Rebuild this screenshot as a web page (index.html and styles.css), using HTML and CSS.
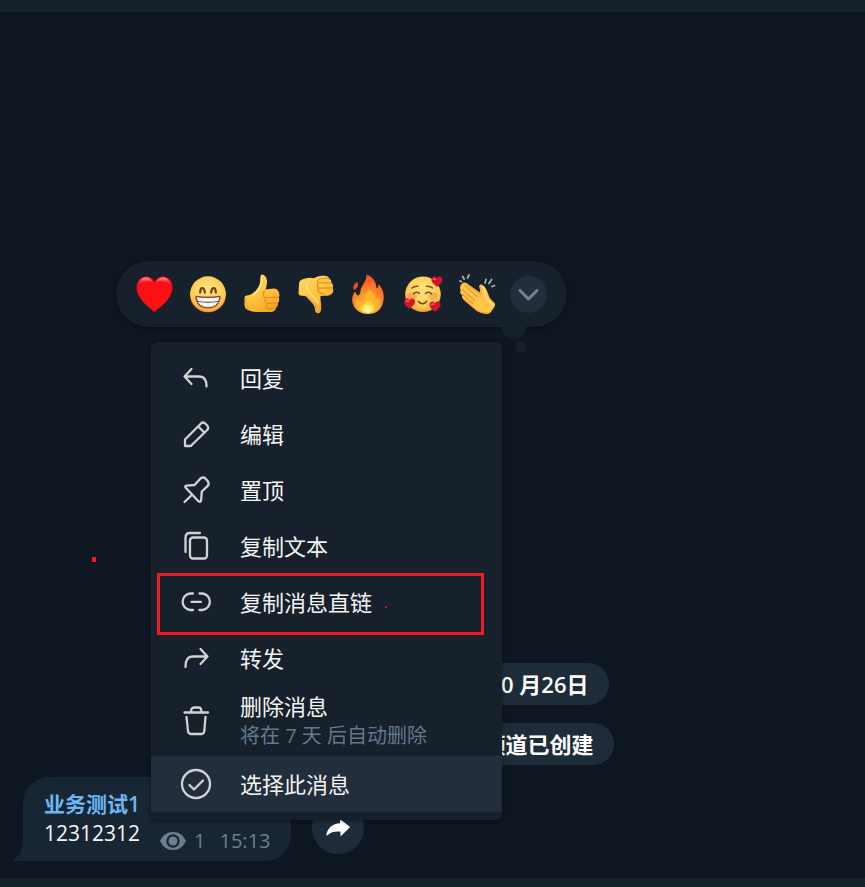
FILE: index.html
```
<!DOCTYPE html>
<html lang="zh-CN">
<head>
  <meta charset="UTF-8">
  <meta name="viewport" content="width=device-width, initial-scale=1">
  <title>业务测试1</title>
  <link rel="stylesheet" href="styles.css">
</head>
<body>

  <header class="top-bar"></header>

  <main class="chat">
    <div class="service">
      <div class="pill">10 月26日</div>
      <div class="pill">频道已创建</div>
    </div>

    <div class="message-row">
      <article class="bubble">
        <svg class="tail" viewBox="0 0 11 24" aria-hidden="true"><path d="M11 0H10C10 11 8 18 1 22Q-1 24 2 24H11Z"/></svg>
        <div class="message">
          <div class="author">业务测试1</div>
          <div class="text">12312312</div>
        </div>
        <div class="meta">
          <svg class="eye" viewBox="0 0 26 20" aria-hidden="true">
            <path d="M0 10C3 4 7 1 13 1s10 3 13 9c-3 6-7 9-13 9S3 16 0 10Z" fill="#6d7f8f"/>
            <circle cx="13" cy="10" r="5.6" fill="none" stroke="#182533" stroke-width="2.2"/>
          </svg>
          <span>1</span>
          <time>15:13</time>
        </div>
      </article>
      <button class="share" aria-label="分享">
        <svg viewBox="0 0 24 18"><path d="M14 1.6Q14 .2 15.2 1L23.4 7.4Q24.2 8 23.4 8.8L15.6 16.6Q14.4 17.6 14.4 16V12.6C9 12.200 5 13 1.400 16.200Q0 17 .4 15.200C2 8.800 6.500 4.600 14 4.200Z" fill="#fff"/></svg>
      </button>
    </div>

    <div class="reactions">
      <div class="emoji-list">
        <button class="emoji" aria-label="爱心">
          <svg viewBox="0 0 40 40">
            <defs>
              <radialGradient id="heart" cx=".5" cy=".45" r=".6"><stop offset=".65" stop-color="#fd1014"/><stop offset="1" stop-color="#d90a20"/></radialGradient>
              <linearGradient id="shine" x2="0" y2="1"><stop stop-color="#ff9aa0"/><stop offset="1" stop-color="#ff1a20" stop-opacity="0"/></linearGradient>
            </defs>
            <path d="M20.500 38.200C17.500 35 2.500 26 2.500 13 2.500 6.500 7 2.400 12 2.400 16 2.400 19 4.800 20.500 8 22 4.800 25 2.400 29 2.400 34 2.400 38.500 6.500 38.500 13 38.500 26 23.500 35 20.500 38.200Z" fill="url(#heart)"/>
            <path d="M4 12C4.500 6 8.500 3.500 12 3.500S18 5.500 19 8.500C15.500 6.500 8.500 6.500 4 12ZM22 8.500C23 5.500 25.500 3.500 29 3.500S36.500 6 37 12C32.500 6.500 25.500 6.500 22 8.500Z" fill="url(#shine)"/>
          </svg>
        </button>
        <button class="emoji" aria-label="露齿笑">
          <svg viewBox="0 0 40 40">
            <defs>
              <radialGradient id="face" cx=".5" cy=".4" r=".6"><stop offset=".3" stop-color="#ffdf72"/><stop offset=".78" stop-color="#fec750"/><stop offset="1" stop-color="#ef9634"/></radialGradient>
            </defs>
            <circle cx="20" cy="20.300" r="18" fill="url(#face)"/>
            <path d="M12.200 18.500C12.500 12.700 16.200 12.700 16.800 18.500M23.200 18.500C23.800 12.700 27.500 12.700 27.800 18.500" fill="none" stroke="#79401c" stroke-width="2.300" stroke-linecap="round"/>
            <path d="M8 23.500Q8 22.300 9.200 22.400Q20 24.200 30.800 22.400Q32 22.300 32 23.500C31 30.500 26.500 33.800 20 33.800S9 30.500 8 23.500Z" fill="#fff" stroke="#8f4d25" stroke-width="1.500"/>
            <path d="M9 27.200Q20 29.500 31 27.200" fill="none" stroke="#7d5a4a" stroke-width="1.100"/>
            <path d="M14 23.500L14.800 32M20 24V33.500M26 23.500L25.200 32" fill="none" stroke="#c9b9b0" stroke-width=".5"/>
          </svg>
        </button>
        <button class="emoji" aria-label="赞">
          <svg viewBox="0 0 40 40">
            <defs>
              <linearGradient id="hand" x1="0" y1="0" x2=".6" y2="1"><stop stop-color="#ffd968"/><stop offset=".6" stop-color="#ffc43d"/><stop offset="1" stop-color="#f5a52b"/></linearGradient>
            </defs>
            <path d="M2.500 24Q2.500 21.500 5 21.600C10 21 14.500 17 17.200 11.500C18.800 8 17.800 4 18.700 1.400Q19.700-.4 21.800 1C26 3.500 25.600 9.500 23.500 15.500L30 14.700Q35.500 14 37 18.500Q38 21.500 36.800 23.500Q38 26.500 36 29.200Q36.300 32.500 34 34Q33.500 37.500 29.500 38H17C12.500 38 8.500 37.500 5 35.500Q2.500 34 2.500 31Z" fill="url(#hand)"/>
            <path d="M23 17C21.200 18 20.500 19.500 21.500 22.200Q22 23.500 24.500 23.600Q21.500 25.500 23.500 28.200Q24.200 29.300 26 29.400Q23 31.500 25 34L27 35M24.500 23.600L35.800 23.200M26 29.400L35.500 29M26.500 34.600L33.500 34" fill="none" stroke="#e28b25" stroke-width="1.100" stroke-linecap="round"/>
            <path d="M19.800 2.300C20.500 8 18 15 11.500 21" fill="none" stroke="#ffe892" stroke-width="1.500" stroke-linecap="round"/>
            <path d="M4 24V30Q4.200 33 7 34.600" fill="none" stroke="#eda23a" stroke-width="1.200"/>
          </svg>
        </button>
        <button class="emoji" aria-label="踩">
          <svg viewBox="0 0 40 40">
            <path d="M3 11Q2.500 7 6 5.500Q12 3 18 4.200Q22 1 28 1.800Q32.500 2 33.500 4.800Q35.800 6 35.500 9Q37.800 11 36.800 14Q38 16.500 36.500 19Q34.500 22 29 21.800L24.500 22C24 25 25.500 29 25.200 35Q24.800 39.200 22 39.200Q19.200 39.200 19 35.500C19 30 13 26.500 10.500 22.800Q8.500 21.500 5 21.800Q2.500 21.500 2.500 19Z" fill="url(#hand)"/>
            <path d="M23.500 5.200Q20.500 6.200 22.300 9Q20 11 22.500 14Q21 16 23.500 18.500Q25 20.300 28 20M23 9L34.500 8.800M23 14.200L36 13.800M24 5Q29 3.500 33 5" fill="none" stroke="#e28b25" stroke-width="1.200" stroke-linecap="round"/>
            <path d="M10.500 12C11 18 18.500 22 22 29" fill="none" stroke="#ffe28a" stroke-width="1.500" stroke-linecap="round"/>
            <path d="M10 21.500C15 26 19 29 20 34" fill="none" stroke="#e99d35" stroke-width="1"/>
          </svg>
        </button>
        <button class="emoji" aria-label="火">
          <svg viewBox="0 0 40 40">
            <defs>
              <radialGradient id="flame" cx=".5" cy=".85" r=".85"><stop offset=".1" stop-color="#ffcc37"/><stop offset=".45" stop-color="#ff962b"/><stop offset="1" stop-color="#fa4726"/></radialGradient>
              <radialGradient id="core" cx=".5" cy=".8" r=".75"><stop stop-color="#fffbe0"/><stop offset=".4" stop-color="#ffe94f"/><stop offset="1" stop-color="#ffb62d"/></radialGradient>
            </defs>
            <path d="M16.500.5C23 3 26.500 8 26.500 14.500Q28.800 13 28.600 10C33 15 35 21 33 28.500C31 36 26.500 40 18 40C9 40 2.500 34 2.200 26C2 22.500 3.500 19.500 5.300 17.500Q6 20.500 7.600 21.500Q10 21.500 10.500 17C11 11.500 16.500 8.500 16.500.5Z" fill="url(#flame)"/>
            <path d="M7.500 8Q9 12 6 14.800Q3 17.500 3.500 12.500Q4 9.500 7.500 8Z" fill="#fb4b24"/>
            <path d="M20 16Q25.500 20.500 25 26Q27.800 24.500 28.200 22.500Q32 31 26.500 36Q23 39 18 39Q9 38.500 6.500 31Q5.500 27 6.800 24.500Q8 27.500 11 28Q14 27.500 14.500 24Q15 19.500 20 16Z" fill="#ffb52d"/>
            <path d="M18 24Q22 27 21.500 31Q24 30.500 25 28.500Q26.500 39 18 39Q9.500 38.500 10 31Q12 32 14.500 30.500Q16.500 28.500 18 24Z" fill="url(#core)"/>
          </svg>
        </button>
        <button class="emoji" aria-label="喜爱">
          <svg viewBox="0 0 40 40">
            <defs>
              <path id="small-heart" d="M0 5.500C-1.500 3.800-5.500 1.500-5.500-1.700C-5.500-5-1.400-6.200 0-3C1.400-6.200 5.500-5 5.500-1.700C5.500 1.500 1.500 3.800 0 5.500Z" fill="#d31529"/>
            </defs>
            <circle cx="19" cy="20.300" r="17.800" fill="url(#face)"/>
            <ellipse cx="8" cy="22" rx="5" ry="3.800" fill="#f58b42" opacity=".5"/>
            <ellipse cx="29" cy="22" rx="5" ry="3.800" fill="#f58b42" opacity=".5"/>
            <path d="M9.500 20C10.500 17.800 14 17.800 15.500 19.500M21.500 19.500C23 17.800 26.500 17.800 27.500 20M8 14Q10.500 11.800 14 12.200M22.500 12.200Q26 11.800 28.500 14" fill="none" stroke="#8d4a1e" stroke-width="1.500" stroke-linecap="round"/>
            <path d="M14.500 27.500Q18.500 32 22.500 27.500" fill="none" stroke="#7d3d18" stroke-width="1.700" stroke-linecap="round"/>
            <use href="#small-heart" x="33" y="7.500"/>
            <use href="#small-heart" x="5.500" y="29.500"/>
            <use href="#small-heart" x="31" y="32.500"/>
            <path d="M29.700 5.500Q30.500 4.300 31.500 5.300M2.500 27.500Q3.500 26.300 4.400 27.400M27.700 30.500Q28.700 29.300 29.600 30.400" fill="none" stroke="#f5757c" stroke-width="1.200" stroke-linecap="round"/>
          </svg>
        </button>
        <button class="emoji" aria-label="鼓掌">
          <svg viewBox="0 0 40 40">
            <path d="M4 9.800Q6 7.500 9 9.500L22 18.500Q22.500 15 21.200 12Q21.500 9.800 24 10.800C28.500 13 29.500 19 32 24.500L36.500 29Q37.800 31 36 33.500L32 39Q27 41.500 19 37L5.500 25.500Q3 23 4.500 21.500Q.8 18.500 2.800 16.500Q1 12 4 9.800Z" fill="#ffc64a"/>
            <path d="M7 11.700L19 22.500M4.500 15.500L16.500 26.500M4.800 20.500L14.500 29.500" fill="none" stroke="#e99834" stroke-width="1.100" stroke-linecap="round"/>
            <path d="M9 10L20.500 19.500Q23.800 21.500 23 17.500L21.800 13" fill="none" stroke="#ee9f39" stroke-width="1.100"/>
            <path d="M24.500 12.500Q27.300 20 29 25.500Q32.500 28 34.500 31" fill="none" stroke="#ffda74" stroke-width="1.600" stroke-linecap="round"/>
            <path d="M6 25.500L19 36.500Q25 40 31 38.500" fill="none" stroke="#ef9f35" stroke-width="1.200"/>
            <path d="M1.800 7L3.500 7.700M4.700 2.500L6.100 5.200M11 1L9.500 4M28 5.500L27 9M33.500 5.500L31 9.500M36.500 11.500L34 12.500" fill="none" stroke="#a5aeb3" stroke-width="1.800" stroke-linecap="round"/>
          </svg>
        </button>
      </div>
      <button class="expand" aria-label="更多表情">
        <svg viewBox="0 0 37 37"><path d="M10 14.500L18.500 23L27 14.500" fill="none" stroke="#6f8498" stroke-width="3" stroke-linecap="round" stroke-linejoin="round"/></svg>
      </button>
    </div>

    <nav class="menu">
      <button class="item">
        <svg viewBox="0 0 32 32"><path d="M11.500 7L4.500 14.500L11.500 22M5 14.500H19.500Q26.500 14.500 26.500 24.500"/></svg>
        <span>回复</span>
      </button>
      <button class="item">
        <svg viewBox="0 0 32 32"><path d="M5 28V21.500L21 5.500Q23 3.500 25.200 5.500L27.500 7.800Q29 10 27.200 12L11.500 27.300Q11 28 10 28ZM18.300 8.500L24.500 14.700"/></svg>
        <span>编辑</span>
      </button>
      <button class="item">
        <svg viewBox="0 0 32 32"><path d="M4.500 28L11.500 21.200M5.500 13.500Q4.500 12.200 6.500 11.700L14.500 11L20.500 4.500Q23 2.500 25.500 4.500L28 7.500Q29.500 10 27.500 12.200L21.800 17.500L21.200 25.500Q21 28.500 18.700 27.500Z"/></svg>
        <span>置顶</span>
      </button>
      <button class="item">
        <svg viewBox="0 0 32 32"><rect x="10" y="7.500" width="17" height="21" rx="3"/><path d="M5.500 22V7.500Q5.500 3 10 3H20"/></svg>
        <span>复制文本</span>
      </button>
      <button class="item marked">
        <svg viewBox="0 0 32 32"><path d="M13 7.500H10A8.300 8.300 0 0 0 10 24H13M19.500 7.500H22.500A8.300 8.300 0 0 1 22.500 24H19.500M11.500 15.800H21"/></svg>
        <span>复制消息直链</span>
      </button>
      <button class="item">
        <svg viewBox="0 0 32 32"><path d="M20.500 7L27.500 14.500L20.500 22M27 14.500H12.500Q5.500 14.500 5.500 25"/></svg>
        <span>转发</span>
      </button>
      <button class="item tall">
        <svg viewBox="0 0 32 32"><path d="M4.500 7.500H28M11 7Q11 2.500 14 2.500H18.500Q21.500 2.500 21.500 7M6.500 12L8 26Q8.300 29 11 29H21.500Q24 29 24.300 26L25.500 12"/></svg>
        <span>删除消息<small>将在 7 天 后自动删除</small></span>
      </button>
      <button class="item active">
        <svg viewBox="0 0 32 32"><circle cx="16" cy="16" r="14"/><path d="M9.500 17L14 21.500L23 12.500"/></svg>
        <span>选择此消息</span>
      </button>
    </nav>

    <i class="dot"></i>
  </main>

  <footer class="bottom-bar"></footer>

</body>
</html>
```

FILE: styles.css
```
* {
  box-sizing: border-box;
}

body {
  margin: 0;
  min-height: 100vh;
  display: flex;
  flex-direction: column;
  background: #0e1621;
  color: #f5f5f5;
  font-family: "Open Sans", "Noto Sans CJK SC", sans-serif;
  overflow: hidden;
}

button {
  padding: 0;
  border: none;
  background: none;
  color: inherit;
  font: inherit;
  cursor: pointer;
}

svg {
  display: block;
  flex-shrink: 0;
}

.top-bar {
  height: 12px;
  background: #17212b;
}

.bottom-bar {
  height: 10px;
  background: #17212b;
  border-top: 1px solid #0a121b;
}

.chat {
  position: relative;
  flex: 1;
  display: flex;
  flex-direction: column;
  justify-content: flex-end;
  padding: 0 23px 16px;
}

/* date and service messages */
.service {
  display: flex;
  flex-direction: column;
  align-items: center;
  gap: 18px;
  padding-left: 212px;
  margin-bottom: 12px;
}

.pill {
  padding: 0 20px;
  border-radius: 21px;
  background: #1e2c3a;
  color: #fff;
  font-size: 22px;
  font-weight: 600;
  line-height: 42px;
}

/* message */
.message-row {
  display: flex;
  align-items: flex-end;
  gap: 21px;
}

.bubble {
  position: relative;
  display: flex;
  align-items: flex-end;
  gap: 20px;
  padding: 13px 20px 6px 21px;
  border-radius: 26px 26px 26px 0;
  background: #182533;
}

.tail {
  position: absolute;
  left: -10px;
  bottom: 0;
  width: 11px;
  height: 24px;
  fill: #182533;
}

.message {
  padding-bottom: 7px;
  font-size: 21px;
  line-height: 29px;
}

.author {
  color: #6ab7f5;
  font-weight: 600;
}

.meta {
  display: flex;
  align-items: center;
  gap: 8px;
  color: #6d7f8f;
  font-size: 20px;
  line-height: 28px;
}

.meta time {
  margin-left: 6px;
}

.eye {
  width: 26px;
  height: 20px;
}

.share {
  display: flex;
  align-items: center;
  justify-content: center;
  width: 52px;
  height: 52px;
  margin-bottom: 7px;
  border-radius: 50%;
  background: #1e2c3a;
}

.share svg {
  width: 24px;
  height: 18px;
}

/* reactions */
.reactions {
  position: absolute;
  left: 116px;
  top: 249px;
  display: flex;
  align-items: center;
  gap: 12px;
  padding: 13px 20px 13px 18px;
  border-radius: 33px;
  background: #17212b;
  box-shadow: 0 1px 4px rgba(0, 0, 0, 0.4);
}

.reactions::before,
.reactions::after {
  content: "";
  position: absolute;
  border-radius: 50%;
  background: #17212b;
}

.reactions::before {
  right: 41px;
  bottom: -12px;
  width: 24px;
  height: 24px;
}

.reactions::after {
  right: 40px;
  bottom: -26px;
  width: 12px;
  height: 12px;
}

.emoji-list {
  display: flex;
  gap: 14px;
}

.emoji svg {
  width: 40px;
  height: 40px;
}

.expand {
  width: 37px;
  height: 37px;
  border-radius: 50%;
  background: #232e3c;
}

/* context menu */
.menu {
  position: absolute;
  left: 151px;
  top: 330px;
  width: 351px;
  padding: 8px 0;
  border-radius: 6px;
  background: #17212b;
  box-shadow: 0 1px 4px rgba(0, 0, 0, 0.4);
}

.item {
  position: relative;
  display: flex;
  align-items: center;
  gap: 28px;
  width: 100%;
  height: 56px;
  padding-left: 29px;
  font-size: 22px;
  line-height: 28px;
  text-align: left;
}

.item svg {
  width: 32px;
  height: 32px;
  fill: none;
  stroke: #d0d2d4;
  stroke-width: 2.3;
  stroke-linecap: round;
  stroke-linejoin: round;
}

.item.tall {
  height: 70px;
}

.item small {
  display: block;
  padding-top: 2px;
  color: #64788b;
  font-size: 20px;
}

.item.active {
  background: #232e3c;
}

.marked::before {
  content: "";
  position: absolute;
  inset: -1px 18px -5px 6px;
  border: 3px solid #ed1c24;
}

.marked::after {
  content: "";
  position: absolute;
  left: 234px;
  top: 32px;
  width: 2px;
  height: 2px;
  background: #c01c26;
}

.dot {
  position: absolute;
  left: 92px;
  top: 545px;
  width: 4px;
  height: 5px;
  background: #ed1c24;
}
```
